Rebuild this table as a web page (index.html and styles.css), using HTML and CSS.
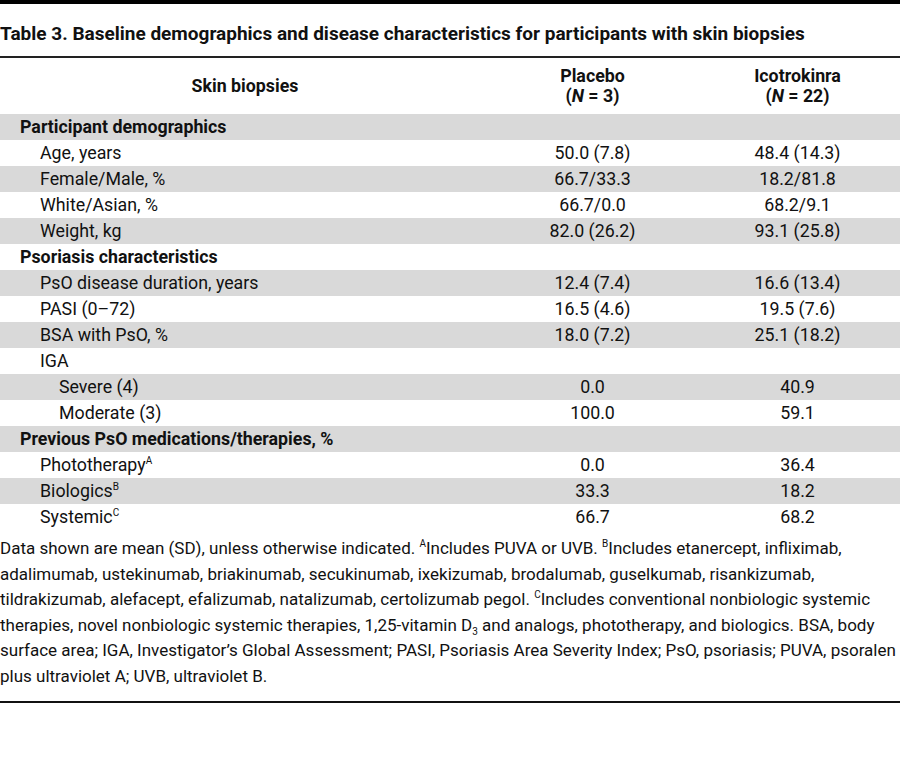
FILE: index.html
```html
<!DOCTYPE html>
<html lang="en">
<head>
    <meta charset="UTF-8">
    <title>Table 3</title>
    <link rel="stylesheet" href="styles.css">
</head>
<body>

<div class="topbar"></div>
<h2 class="caption">Table 3. Baseline demographics and disease characteristics for participants with skin biopsies</h2>

<table class="data">
    <thead>
        <tr>
            <th class="col-label">Skin biopsies</th>
            <th class="col-num">Placebo<br>(<i>N</i> = 3)</th>
            <th class="col-num">Icotrokinra<br>(<i>N</i> = 22)</th>
        </tr>
    </thead>
    <tbody>
        <tr class="section"><td>Participant demographics</td><td></td><td></td></tr>
        <tr><td class="lv1">Age, years</td><td>50.0 (7.8)</td><td>48.4 (14.3)</td></tr>
        <tr><td class="lv1">Female/Male, %</td><td>66.7/33.3</td><td>18.2/81.8</td></tr>
        <tr><td class="lv1">White/Asian, %</td><td>66.7/0.0</td><td>68.2/9.1</td></tr>
        <tr><td class="lv1">Weight, kg</td><td>82.0 (26.2)</td><td>93.1 (25.8)</td></tr>
        <tr class="section"><td>Psoriasis characteristics</td><td></td><td></td></tr>
        <tr><td class="lv1">PsO disease duration, years</td><td>12.4 (7.4)</td><td>16.6 (13.4)</td></tr>
        <tr><td class="lv1">PASI (0–72)</td><td>16.5 (4.6)</td><td>19.5 (7.6)</td></tr>
        <tr><td class="lv1">BSA with PsO, %</td><td>18.0 (7.2)</td><td>25.1 (18.2)</td></tr>
        <tr><td class="lv1">IGA</td><td></td><td></td></tr>
        <tr><td class="lv2">Severe (4)</td><td>0.0</td><td>40.9</td></tr>
        <tr><td class="lv2">Moderate (3)</td><td>100.0</td><td>59.1</td></tr>
        <tr class="section"><td>Previous PsO medications/therapies, %</td><td></td><td></td></tr>
        <tr><td class="lv1">Phototherapy<sup>A</sup></td><td>0.0</td><td>36.4</td></tr>
        <tr><td class="lv1">Biologics<sup>B</sup></td><td>33.3</td><td>18.2</td></tr>
        <tr><td class="lv1">Systemic<sup>C</sup></td><td>66.7</td><td>68.2</td></tr>
    </tbody>
</table>

<p class="notes">Data shown are mean (SD), unless otherwise indicated. <sup>A</sup>Includes PUVA or UVB. <sup>B</sup>Includes etanercept, infliximab,<br>
adalimumab, ustekinumab, briakinumab, secukinumab, ixekizumab, brodalumab, guselkumab, risankizumab,<br>
tildrakizumab, alefacept, efalizumab, natalizumab, certolizumab pegol. <sup>C</sup>Includes conventional nonbiologic systemic<br>
therapies, novel nonbiologic systemic therapies, 1,25-vitamin D<sub>3</sub> and analogs, phototherapy, and biologics. BSA, body<br>
surface area; IGA, Investigator’s Global Assessment; PASI, Psoriasis Area Severity Index; PsO, psoriasis; PUVA, psoralen<br>
plus ultraviolet A; UVB, ultraviolet B.</p>

<div class="endline"></div>

</body>
</html>
```

FILE: styles.css
```css
body {
    margin: 0;
    width: 900px;
    font-family: Roboto, "Liberation Sans", sans-serif;
    color: #111;
    background: #fff;
}
.topbar {
    height: 4px;
    background-color: #000;
}
.caption {
    margin: 0;
    padding: 19px 0 11px 0;
    font-size: 19px;
    font-weight: bold;
    line-height: 22px;
    white-space: nowrap;
    border-bottom: 2px solid #222;
}
.data {
    width: 900px;
    border-collapse: collapse;
    font-size: 17.8px;
}
.data th {
    height: 56px;
    padding: 0;
    font-weight: bold;
    line-height: 20px;
    text-align: center;
}
.col-label {
    width: 490px;
}
.col-num {
    width: 205px;
}
.data td {
    height: 26px;
    padding: 0;
    line-height: 26px;
    text-align: center;
}
.data td:first-child {
    text-align: left;
    padding-left: 20px;
}
.data tbody tr:nth-child(odd) {
    background-color: #d9d9d9;
}
.data tr.section td {
    font-weight: bold;
}
.data td.lv1 {
    padding-left: 40px;
}
.data td.lv2 {
    padding-left: 59px;
}
sup {
    font-size: 10px;
    line-height: 0;
    vertical-align: 7px;
}
sub {
    font-size: 10px;
    line-height: 0;
    vertical-align: -4px;
}
.notes {
    margin: 6px 0 0 0;
    font-size: 17px;
    line-height: 25.5px;
    white-space: nowrap;
}
.endline {
    margin-top: 12px;
    height: 2px;
    background-color: #111;
}
```
